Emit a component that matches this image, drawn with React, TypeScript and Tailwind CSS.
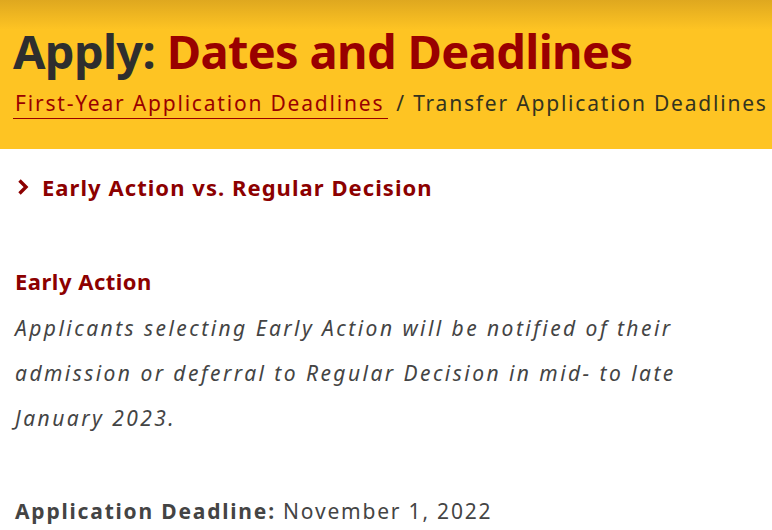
import React from "react";

const font = { fontFamily: '"Noto Sans", "Open Sans", sans-serif' };

function Chevron() {
  return (
    <svg width="12" height="16" viewBox="0 0 12 16" className="shrink-0">
      <path d="M2.5 1.5 L9 8 L2.5 14.5" fill="none" stroke="#8c0000" strokeWidth="3.4" strokeLinecap="butt" />
    </svg>
  );
}

export default function App() {
  return (
    <div className="w-[772px] h-[530px] overflow-hidden bg-white" style={font}>
      {/* header band */}
      <header className="h-[149px] bg-gradient-to-b from-[#dfa81f] via-[#fec423] via-20% to-[#fec423] px-[13px] pt-[22px]">
        <h1 className="text-[47px] leading-[58px] font-bold tracking-[-0.65px] text-[#2e2e2e] whitespace-nowrap">
          Apply: <span className="text-[#990000]">Dates and Deadlines</span>
        </h1>
        <nav className="mt-[8px] flex items-baseline whitespace-nowrap text-[21px] leading-[30px] tracking-[1.8px]">
          <a className="text-[#990000] border-b border-[#990000] pr-[4px] pl-[2px]">
            First-Year Application Deadlines
          </a>
          <span className="ml-[8px] text-[#33331f]">/ Transfer Application Deadlines</span>
        </nav>
      </header>

      <main className="px-[15px]">
        <div className="flex items-center gap-[13px] pt-[26px] pl-[2px]">
          <Chevron />
          <h2 className="text-[22px] leading-[24px] font-bold tracking-[1.05px] text-[#8c0000]">
            Early Action vs. Regular Decision
          </h2>
        </div>

        <h3 className="mt-[68px] text-[22px] leading-[28px] font-bold tracking-[0.5px] text-[#8c0000]">Early Action</h3>
        <p className="mt-[11px] text-[21px] leading-[45px] italic tracking-[2.45px] text-[#444444] whitespace-nowrap">
          Applicants selecting Early Action will be notified of their
          <br />
          admission or deferral to Regular Decision in mid- to late
          <br />
          January 2023.
        </p>

        <p className="mt-[56px] text-[21px] leading-[28px] tracking-[1.8px] text-[#444444]">
          <span className="font-bold">Application Deadline:</span> November 1, 2022
        </p>
      </main>
    </div>
  );
}
